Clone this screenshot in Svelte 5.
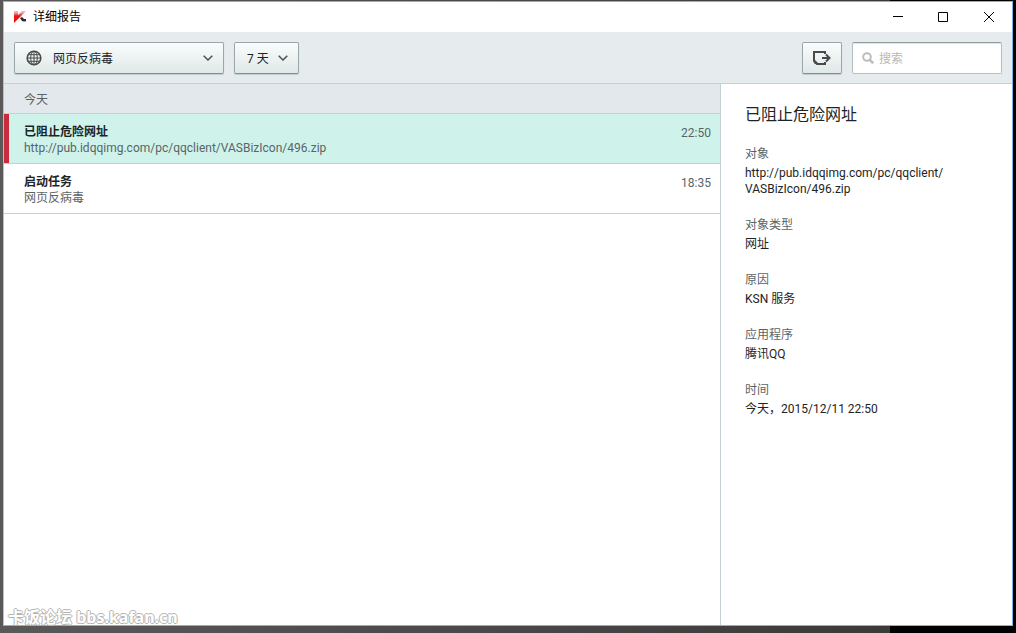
<script lang="ts">
  interface ReportEvent {
    id: number;
    title: string;
    subtitle: string;
    time: string;
    danger: boolean;
    details: { label: string; value: string }[];
  }

  const components = ['网页反病毒'];
  const periods = ['7 天'];

  const events: ReportEvent[] = [
    {
      id: 1,
      title: '已阻止危险网址',
      subtitle: 'http://pub.idqqimg.com/pc/qqclient/VASBizIcon/496.zip',
      time: '22:50',
      danger: true,
      details: [
        { label: '对象', value: 'http://pub.idqqimg.com/pc/qqclient/VASBizIcon/496.zip' },
        { label: '对象类型', value: '网址' },
        { label: '原因', value: 'KSN 服务' },
        { label: '应用程序', value: '腾讯QQ' },
        { label: '时间', value: '今天，2015/12/11 22:50' }
      ]
    },
    {
      id: 2,
      title: '启动任务',
      subtitle: '网页反病毒',
      time: '18:35',
      danger: false,
      details: []
    }
  ];

  let component = $state(components[0]);
  let period = $state(periods[0]);
  let query = $state('');
  let selectedId = $state(1);

  let selected = $derived(events.find((e) => e.id === selectedId) ?? events[0]);
</script>

<div class="desktop">
  <div class="window">
    <header class="titlebar">
      <svg class="logo" width="14" height="14" viewBox="0 0 14 14" aria-hidden="true">
        <defs>
          <linearGradient id="logo-red" x1="0" y1="0" x2="0" y2="12" gradientUnits="userSpaceOnUse">
            <stop offset=".2" stop-color="#f5b0b0" />
            <stop offset=".5" stop-color="#e81410" />
          </linearGradient>
        </defs>
        <path d="M0 1h4v4l4-4h4L3 10l-3 3z" fill="url(#logo-red)" />
        <path d="M6 8l2-1 2 2h2v2H8z" fill="#2c2c2c" />
        <path d="M8 11h4v1H9z" fill="#aaa" />
      </svg>
      <h1>详细报告</h1>
      <div class="controls">
        <button aria-label="最小化">
          <svg width="11" height="11" viewBox="0 0 11 11"><path d="M1 4.5h10" /></svg>
        </button>
        <button aria-label="最大化">
          <svg width="11" height="11" viewBox="0 0 11 11"><path d="M.5.5h9v9h-9z" /></svg>
        </button>
        <button aria-label="关闭">
          <svg width="11" height="11" viewBox="0 0 11 11"><path d="M0 0l10 10M10 0L0 10" /></svg>
        </button>
      </div>
    </header>

    <div class="toolbar">
      <div class="dropdown component">
        <svg class="globe" width="16" height="16" viewBox="0 0 16 16" aria-hidden="true">
          <circle cx="8" cy="8" r="6.8" stroke-width="1.6" />
          <ellipse cx="8" cy="8" rx="3.3" ry="6.8" />
          <path d="M8 1v14M1 8h14M2.2 4.7h11.6M2.2 11.3h11.6" />
        </svg>
        <select aria-label="组件" bind:value={component}>
          {#each components as name}
            <option>{name}</option>
          {/each}
        </select>
        <svg class="chevron" width="10" height="6" viewBox="0 0 10 6" aria-hidden="true"><path d="M.7.7L5 5 9.3.7" /></svg>
      </div>

      <div class="dropdown period">
        <select aria-label="期间" bind:value={period}>
          {#each periods as name}
            <option>{name}</option>
          {/each}
        </select>
        <svg class="chevron" width="10" height="6" viewBox="0 0 10 6" aria-hidden="true"><path d="M.7.7L5 5 9.3.7" /></svg>
      </div>

      <button class="export" aria-label="导出">
        <svg width="20" height="16" viewBox="0 0 20 16">
          <path d="M13 4V2H2v9l3 3h8v-2" />
          <path d="M10 8h8M14 4.5L17.5 8 14 11.5" />
          <path d="M2 9l5 5H3L2 13z" fill="#4a4a4a" stroke="none" />
        </svg>
      </button>

      <label class="search">
        <svg width="12" height="12" viewBox="0 0 12 12" aria-hidden="true">
          <circle cx="5" cy="5" r="3.8" />
          <path d="M7.8 7.8l3.4 3.4" stroke-width="2.6" />
        </svg>
        <input type="text" placeholder="搜索" aria-label="搜索" bind:value={query} />
      </label>
    </div>

    <div class="content">
      <main>
        <h2 class="day">今天</h2>
        <ul>
          {#each events as event (event.id)}
            <li>
              <button
                class="event"
                class:danger={event.danger}
                class:selected={event.id === selectedId}
                onclick={() => (selectedId = event.id)}
              >
                <span class="text">
                  <strong>{event.title}</strong>
                  <span>{event.subtitle}</span>
                </span>
                <time>{event.time}</time>
              </button>
            </li>
          {/each}
        </ul>
      </main>

      <aside>
        <h2>{selected.title}</h2>
        <dl>
          {#each selected.details as { label, value }}
            <div>
              <dt>{label}</dt>
              <!-- long addresses may only wrap after a slash -->
              <dd>{#each value.split('/') as part, i}{#if i > 0}/<wbr />{/if}{part}{/each}</dd>
            </div>
          {/each}
        </dl>
      </aside>
    </div>
  </div>

  <span class="watermark">卡饭论坛 bbs.kafan.cn</span>
</div>

<style>
  :global(body) {
    margin: 0;
  }

  .desktop {
    box-sizing: border-box;
    display: flex;
    position: relative;
    min-height: 100vh;
    padding: 1px 3px 7px;
    background: linear-gradient(90deg, #5b585a, #3c3939 890px, #000 890px);
    font-family: Roboto, 'Noto Sans CJK SC', sans-serif;
    font-size: 12px;
    line-height: 16px;
    color: #1d2426;
  }

  .window {
    display: flex;
    flex: 1;
    flex-direction: column;
    border: 1px solid #7cb2e4;
    border-left-color: #a9c3dc;
    background: #fff;
  }

  h1,
  h2,
  dl,
  dd,
  ul {
    margin: 0;
    padding: 0;
    font-weight: normal;
    list-style: none;
  }

  button,
  select,
  input {
    font: inherit;
    color: inherit;
  }

  svg {
    flex: none;
    fill: none;
  }

  .titlebar {
    display: flex;
    align-items: center;
    height: 30px;
    padding-left: 10px;
    color: #000;
  }

  h1 {
    flex: 1;
    margin-left: 5px;
    font-size: 12px;
  }

  .controls {
    display: flex;
  }

  .controls button {
    display: flex;
    align-items: center;
    justify-content: center;
    width: 46px;
    height: 30px;
    padding: 0;
    border: none;
    background: none;
  }

  .controls svg {
    stroke: #000;
  }

  .toolbar {
    display: flex;
    gap: 10px;
    padding: 10px 10px 9px;
    border-bottom: 1px solid #c5d0d5;
    background: #e6ecee;
  }

  .dropdown {
    display: flex;
    position: relative;
    align-items: center;
  }

  .dropdown select,
  .export {
    box-sizing: border-box;
    height: 32px;
    border: 1px solid #9aa8a8;
    border-bottom-color: #7e8f8e;
    border-radius: 2px;
    background: linear-gradient(#fafcfc, #dfe9e7);
    box-shadow: 0 1px 1px #c3cdcd;
  }

  .dropdown select {
    width: 100%;
    padding: 2px 12px 0;
    appearance: none;
  }

  .component {
    width: 210px;
  }

  .component select {
    padding-left: 38px;
  }

  .period {
    width: 65px;
  }

  .globe {
    position: absolute;
    left: 12px;
    stroke: #4a4a4a;
  }

  .chevron {
    position: absolute;
    right: 11px;
    stroke: #4a5254;
    stroke-width: 1.5;
    pointer-events: none;
  }

  .export {
    display: flex;
    align-items: center;
    justify-content: center;
    width: 40px;
    margin-left: auto;
    padding: 0;
  }

  .export svg {
    stroke: #4a4a4a;
    stroke-width: 2;
  }

  .search {
    box-sizing: border-box;
    display: flex;
    gap: 5px;
    align-items: center;
    width: 150px;
    height: 32px;
    padding: 0 9px;
    border: 1px solid #b4c0c0;
    border-top-color: #8e9d9d;
    border-radius: 2px;
    background: #fff;
    box-shadow: inset 0 1px 1px #dde3e3;
  }

  .search svg {
    stroke: #bdbdbd;
    stroke-width: 2;
  }

  .search input {
    flex: 1;
    min-width: 0;
    padding: 2px 0 0;
    border: none;
    outline: none;
    background: none;
  }

  .search input::placeholder {
    color: #b8b8b8;
  }

  .content {
    display: flex;
    flex: 1;
  }

  main {
    flex: 1;
    min-width: 0;
  }

  .day {
    padding: 8px 20px 5px;
    background: #e3e8ec;
    font-size: 12px;
    color: #5a6468;
  }

  .day,
  li {
    border-bottom: 1px solid #c5d0d5;
  }

  .event {
    display: flex;
    justify-content: space-between;
    width: 100%;
    padding: 10px 9px 7px 15px;
    border: solid transparent;
    border-width: 0 0 0 5px;
    background: #fff;
    text-align: left;
    color: #5a6468;
  }

  .event.danger {
    border-left-color: #c72c3c;
  }

  .event.selected {
    background-color: #cff3ea;
  }

  .event .text {
    display: flex;
    flex-direction: column;
  }

  .event strong {
    color: #1d2426;
  }

  .event time {
    padding-top: 1px;
  }

  aside {
    box-sizing: border-box;
    width: 292px;
    padding: 19px 24px;
    border-left: 1px solid #c5d0d5;
  }

  aside h2 {
    margin-bottom: 19px;
    font-size: 16px;
    line-height: 24px;
  }

  dl div {
    margin-bottom: 20px;
  }

  dt {
    margin-bottom: 3px;
    color: #5a6468;
  }

  .watermark {
    position: absolute;
    bottom: 6px;
    left: 8px;
    font-family: 'Noto Sans', 'Noto Sans CJK SC', sans-serif;
    font-size: 16px;
    font-weight: bold;
    line-height: 20px;
    color: #fff;
    text-shadow: 1px 0 #b4b4b4, -1px 0 #b4b4b4, 0 1px #b4b4b4, 0 -1px #b4b4b4;
  }
</style>
